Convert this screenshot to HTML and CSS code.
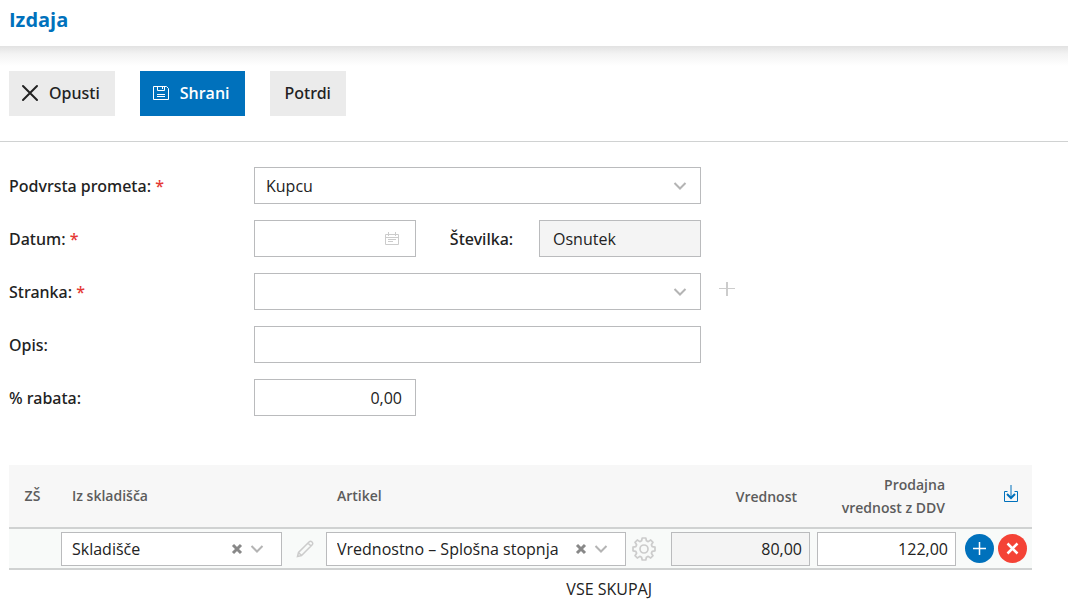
FILE: index.html
```html
<!DOCTYPE html>
<html lang="sl">
<head>
    <meta charset="UTF-8">
    <meta name="viewport" content="width=device-width, initial-scale=1.0">
    <title>Izdaja</title>
    <link rel="stylesheet" href="styles.css">
</head>
<body>
    <header class="page-header">
        <h1>Izdaja</h1>
    </header>

    <div class="toolbar">
        <button type="button" class="btn">
            <svg class="icon" width="18" height="18" viewBox="0 0 18 18"><path d="M2 2L16 16M16 2L2 16" stroke-width="2" stroke-linecap="round"/></svg>
            Opusti
        </button>
        <button type="submit" form="issueForm" class="btn btn-primary">
            <svg class="icon" width="18" height="18" viewBox="0 0 18 18"><path d="M1.500 2.500H14.500L16.500 4.500V15.500H1.500ZM5.500 2.500V6.500H12.500V2.500M10.500 3V5M5 10.500H13M5 12.500H13"/></svg>
            Shrani
        </button>
        <button type="button" class="btn btn-plain">Potrdi</button>
    </div>

    <form id="issueForm">
        <div class="form-rows">
            <div class="form-row">
                <label for="subtype">Podvrsta prometa: <span class="required">*</span></label>
                <div class="select-box field-wide">
                    <select id="subtype">
                        <option>Kupcu</option>
                    </select>
                    <svg class="icon chevron" width="14" height="10" viewBox="0 0 14 10"><path d="M1.500 2L7 7.500L12.500 2" stroke-width="2"/></svg>
                </div>
            </div>
            <div class="form-row">
                <label for="date">Datum: <span class="required">*</span></label>
                <div class="field-wide split">
                    <div class="date-box">
                        <input type="text" id="date">
                        <svg class="icon calendar" width="16" height="14" viewBox="0 0 16 14"><path d="M1.500 2.500H14.500V12.500H1.500ZM1.500 5.500H14.500M4.500 0V4M11.500 0V4M4 7.500H12M4 9.500H9"/></svg>
                    </div>
                    <label for="number">Številka:</label>
                    <input type="text" id="number" class="field-short" value="Osnutek" readonly>
                </div>
            </div>
            <div class="form-row">
                <label for="customer">Stranka: <span class="required">*</span></label>
                <div class="select-box field-wide">
                    <select id="customer">
                        <option></option>
                    </select>
                    <svg class="icon chevron" width="14" height="10" viewBox="0 0 14 10"><path d="M1.500 2L7 7.500L12.500 2" stroke-width="2"/></svg>
                </div>
                <button type="button" class="icon-btn add-customer" aria-label="Dodaj stranko">
                    <svg class="icon" width="16" height="16" viewBox="0 0 16 16"><path d="M8 1V15" stroke-width="2"/><path d="M0 7.500H16"/></svg>
                </button>
            </div>
            <div class="form-row">
                <label for="description">Opis:</label>
                <input type="text" id="description" class="field-wide">
            </div>
            <div class="form-row">
                <label for="discount">% rabata:</label>
                <input type="text" id="discount" class="field-short number" value="0,00">
            </div>
        </div>

        <table class="items">
            <colgroup>
                <col class="col-no">
                <col class="col-warehouse">
                <col class="col-article">
                <col class="col-value">
                <col class="col-price">
                <col class="col-actions">
            </colgroup>
            <thead>
                <tr>
                    <th class="center">ZŠ</th>
                    <th>Iz skladišča</th>
                    <th>Artikel</th>
                    <th class="right">Vrednost</th>
                    <th class="right">Prodajna vrednost z DDV</th>
                    <th class="actions-head">
                        <button type="button" class="icon-btn import" aria-label="Uvoz">
                            <svg class="icon" width="16" height="18" viewBox="0 0 16 18"><path d="M4.500 6.500H1.500V16.500H14.500V6.500H11.500M8 0V12"/><path d="M4 9L8 13L12 9" stroke-width="2"/></svg>
                        </button>
                    </th>
                </tr>
            </thead>
            <tbody>
                <tr>
                    <td></td>
                    <td>
                        <div class="cell">
                            <div class="select-box clearable warehouse">
                                <select aria-label="Iz skladišča">
                                    <option>Skladišče</option>
                                </select>
                                <button type="button" class="icon-btn clear" aria-label="Počisti skladišče">
                                    <svg class="icon" width="12" height="12" viewBox="0 0 12 12"><path d="M2 2L10 10M10 2L2 10" stroke-width="3"/></svg>
                                </button>
                                <svg class="icon chevron" width="14" height="10" viewBox="0 0 14 10"><path d="M1.500 2L7 7.500L12.500 2" stroke-width="2"/></svg>
                            </div>
                            <button type="button" class="icon-btn edit" aria-label="Uredi">
                                <svg class="icon" width="18" height="18" viewBox="0 0 18 18"><path d="M1.500 16.500L2.500 12.500L13 2C14 1 15 1 16 2C17 3 17 4 16 5L5.500 15.500ZM2.500 12.500L5.500 15.500M12 3L15 6" stroke-width="1.500"/></svg>
                            </button>
                        </div>
                    </td>
                    <td>
                        <div class="cell">
                            <div class="select-box clearable article">
                                <select aria-label="Artikel">
                                    <option>Vrednostno – Splošna stopnja</option>
                                </select>
                                <button type="button" class="icon-btn clear" aria-label="Počisti artikel">
                                    <svg class="icon" width="12" height="12" viewBox="0 0 12 12"><path d="M2 2L10 10M10 2L2 10" stroke-width="3"/></svg>
                                </button>
                                <svg class="icon chevron" width="14" height="10" viewBox="0 0 14 10"><path d="M1.500 2L7 7.500L12.500 2" stroke-width="2"/></svg>
                            </div>
                            <button type="button" class="icon-btn settings" aria-label="Nastavitve">
                                <svg class="icon" width="24" height="24" viewBox="0 0 24 24"><path d="M10.200 1H13.800L14.400 3.800L16.200 4.600L18.700 3L21 5.300L19.400 7.800L20.200 9.600L23 10.200V13.800L20.200 14.400L19.400 16.200L21 18.700L18.700 21L16.200 19.400L14.400 20.200L13.800 23H10.200L9.600 20.200L7.800 19.400L5.300 21L3 18.700L4.600 16.200L3.800 14.400L1 13.800V10.200L3.800 9.600L4.600 7.800L3 5.300L5.300 3L7.800 4.600L9.600 3.800Z" stroke-width="1.700" stroke-linejoin="round"/><circle cx="12" cy="12" r="4" stroke-width="1.700"/></svg>
                            </button>
                        </div>
                    </td>
                    <td><input type="text" class="number amount" aria-label="Vrednost" value="80,00" readonly></td>
                    <td><input type="text" class="number amount" aria-label="Prodajna vrednost z DDV" value="122,00"></td>
                    <td>
                        <div class="row-actions">
                            <button type="button" class="round add" aria-label="Dodaj vrstico">
                                <svg class="icon" width="15" height="15" viewBox="0 0 15 15"><path d="M7.500 1V14M1 7.500H14" stroke-width="1.500"/></svg>
                            </button>
                            <button type="button" class="round remove" aria-label="Briši vrstico">
                                <svg class="icon" width="15" height="15" viewBox="0 0 15 15"><path d="M2.500 2.500L12.500 12.500M12.500 2.500L2.500 12.500" stroke-width="2.500"/></svg>
                            </button>
                        </div>
                    </td>
                </tr>
            </tbody>
            <tfoot>
                <tr>
                    <td colspan="3">VSE SKUPAJ</td>
                    <td colspan="3"></td>
                </tr>
            </tfoot>
        </table>
    </form>
</body>
</html>
```
FILE: styles.css
```css
* {
    box-sizing: border-box;
}
body {
    margin: 0;
    background: #fff;
    color: #222;
    font-family: "Open Sans", "Noto Sans", sans-serif;
    font-size: 16px;
    line-height: 24px;
}
button, input, select {
    font: inherit;
    color: inherit;
}
.icon {
    display: block;
    flex: none;
    fill: none;
    stroke: currentColor;
}

/* header and buttons */
.page-header {
    height: 46px;
    padding: 6px 9px;
}
h1 {
    margin: 0;
    font-size: 20px;
    line-height: 28px;
    font-weight: 700;
    color: #0071bc;
}
.toolbar {
    display: flex;
    gap: 25px;
    padding: 25px 9px;
    border-bottom: 1px solid #d0d2d2;
    background: linear-gradient(#e2e2e2, #f3f3f3 8px, #fff 20px);
}
.btn {
    display: flex;
    align-items: center;
    gap: 10px;
    height: 45px;
    padding: 0 15px 1px 12px;
    border: 0;
    background: #ebebeb;
    font-family: "Noto Sans", "Open Sans", sans-serif;
    font-weight: 500;
    cursor: pointer;
}
.btn-primary {
    background: #0071bc;
    color: #fff;
    font-family: "Open Sans", "Noto Sans", sans-serif;
    font-weight: 600;
}
.btn-plain {
    padding: 0 15px 1px;
}
.icon-btn {
    padding: 0;
    border: 0;
    background: none;
    color: #ccc;
    cursor: pointer;
}

/* form */
.form-rows {
    display: flex;
    flex-direction: column;
    gap: 16px;
    padding: 25px 9px 49px;
}
.form-row {
    display: flex;
    align-items: center;
}
.form-row label {
    font-family: "Noto Sans", "Open Sans", sans-serif;
    font-weight: 500;
}
.form-row > label {
    width: 245px;
    flex: none;
}
.required {
    color: #e53935;
}
input, select {
    width: 100%;
    height: 37px;
    padding: 0 13px;
    border: 1px solid #babbbd;
    border-radius: 0;
    background: #fff;
}
input[readonly] {
    background: #f4f4f4;
}
select {
    padding: 0 40px 0 11px;
    appearance: none;
}
.field-wide {
    width: 447px;
}
.field-short, .date-box {
    width: 162px;
}
.split {
    display: flex;
    align-items: center;
    justify-content: space-between;
}
.split label {
    margin-left: 8px;
}
.select-box, .date-box {
    position: relative;
}
.chevron, .calendar, .clear {
    position: absolute;
    top: 0;
    bottom: 0;
    margin: auto 0;
    pointer-events: none;
}
.chevron {
    right: 14px;
    color: #b4b4b4;
}
.calendar {
    right: 16px;
    color: #ccc;
}
.add-customer {
    margin-left: 18px;
    padding-bottom: 6px;
}
.number {
    text-align: right;
}

/* items table */
.items {
    width: calc(100% - 45px);
    margin: 0 36px 0 9px;
    table-layout: fixed;
    border-collapse: separate;
    border-spacing: 0;
}
.col-no {
    width: 52px;
}
.col-warehouse {
    width: 265px;
}
.col-article {
    width: 345px;
}
.col-value {
    width: 146px;
}
.col-price {
    width: 148px;
}
.col-actions {
    width: 67px;
}
.items th {
    height: 64px;
    padding: 0 11px 2px;
    border-bottom: 2px solid #d0d2d2;
    background: #f7f7f7;
    color: #5c5c5c;
    font-size: 14px;
    line-height: 23px;
    font-weight: 600;
    text-align: left;
}
.items .center {
    padding: 0 5px 2px 0;
    text-align: center;
}
.items .right {
    padding: 0 20px 0 10px;
    text-align: right;
}
.items .actions-head {
    padding: 0 13px 4px 0;
}
.import {
    display: block;
    margin-left: auto;
    color: #0071bc;
}
.items tbody td {
    height: 41px;
    padding: 0;
    border-bottom: 2px solid #d0d2d2;
    background: #f8faf9;
}
.items input, .items select {
    display: block;
    height: 34px;
}
.items .amount {
    width: 139px;
    padding: 0 7px;
}
.cell {
    display: flex;
    align-items: center;
}
.items .clearable select {
    padding: 0 60px 0 10px;
}
.clearable .chevron {
    right: 18px;
}
.clear {
    right: 39px;
    height: 12px;
    color: #888;
    pointer-events: auto;
}
.warehouse {
    width: 221px;
}
.article {
    width: 300px;
}
.edit {
    margin-left: 14px;
}
.settings {
    margin-left: 6px;
}
.row-actions {
    display: flex;
    gap: 4px;
}
.round {
    display: flex;
    align-items: center;
    justify-content: center;
    width: 29px;
    height: 29px;
    padding: 0;
    border: 0;
    border-radius: 50%;
    color: #fff;
    cursor: pointer;
}
.add {
    background: #0071bc;
}
.remove {
    background: #f44336;
}
.items tfoot td {
    padding: 7px 19px 0 0;
    text-align: right;
}
```
